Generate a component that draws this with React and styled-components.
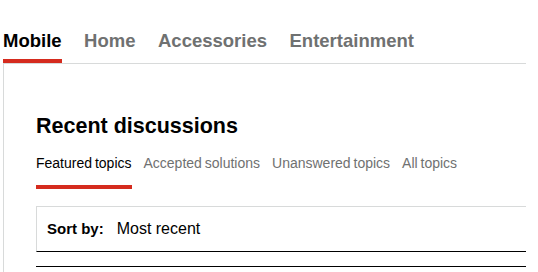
import React from "react";
import styled, { createGlobalStyle } from "styled-components";

const Global = createGlobalStyle`
  html, body { margin: 0; padding: 0; background: #fff; }
  body { font-family: "Liberation Sans", Arial, sans-serif; color: #000; }
`;

const Frame = styled.div`
  width: 523px;
  margin-left: 3px;
  overflow: hidden;
`;

const TabBar = styled.nav`
  display: flex;
  gap: 22.5px;
  border-bottom: 1px solid #d8dada;
`;

const Tab = styled.div`
  padding: 30px 0 7px;
  font-size: 18.5px;
  line-height: 22px;
  font-weight: 700;
  color: ${(p) => (p.$active ? "#000" : "#6f7171")};
  border-bottom: 4px solid ${(p) => (p.$active ? "#d52b1e" : "transparent")};
  white-space: nowrap;
`;

const Panel = styled.section`
  width: 600px;
  border-left: 1px solid #d8dada;
  padding: 49px 0 0 32px;
  box-sizing: border-box;
`;

const Heading = styled.h2`
  margin: 0;
  font-size: 21.5px;
  line-height: 26px;
  font-weight: 700;
`;

const SubTabs = styled.div`
  display: flex;
  gap: 12px;
  margin-top: 15px;
`;

const SubTab = styled.div`
  padding-bottom: 13px;
  font-size: 14px;
  line-height: 18px;
  word-spacing: -1px;
  color: ${(p) => (p.$active ? "#000" : "#6f7171")};
  border-bottom: 4px solid ${(p) => (p.$active ? "#d52b1e" : "transparent")};
  white-space: nowrap;
`;

const SortBox = styled.div`
  margin-top: 17px;
  display: flex;
  align-items: baseline;
  gap: 13px;
  padding: 12px 10px 12px;
  border: 1px solid #d8dada;
  border-bottom-color: #000;
`;

const SortLabel = styled.span`
  font-size: 15px;
  line-height: 20px;
  font-weight: 700;
`;

const SortValue = styled.span`
  font-size: 16px;
  line-height: 20px;
`;

const ListTop = styled.div`
  margin-top: 14px;
  border-top: 1px solid #000;
  height: 10px;
`;

export default function App() {
  const tabs = ["Mobile", "Home", "Accessories", "Entertainment"];
  const sub = ["Featured topics", "Accepted solutions", "Unanswered topics", "All topics"];
  return (
    <>
      <Global />
      <Frame>
        <TabBar>
          {tabs.map((t, i) => (
            <Tab key={t} $active={i === 0}>{t}</Tab>
          ))}
        </TabBar>
        <Panel>
          <Heading>Recent discussions</Heading>
          <SubTabs>
            {sub.map((t, i) => (
              <SubTab key={t} $active={i === 0}>{t}</SubTab>
            ))}
          </SubTabs>
          <SortBox>
            <SortLabel>Sort by:</SortLabel>
            <SortValue>Most recent</SortValue>
          </SortBox>
          <ListTop />
        </Panel>
      </Frame>
    </>
  );
}
